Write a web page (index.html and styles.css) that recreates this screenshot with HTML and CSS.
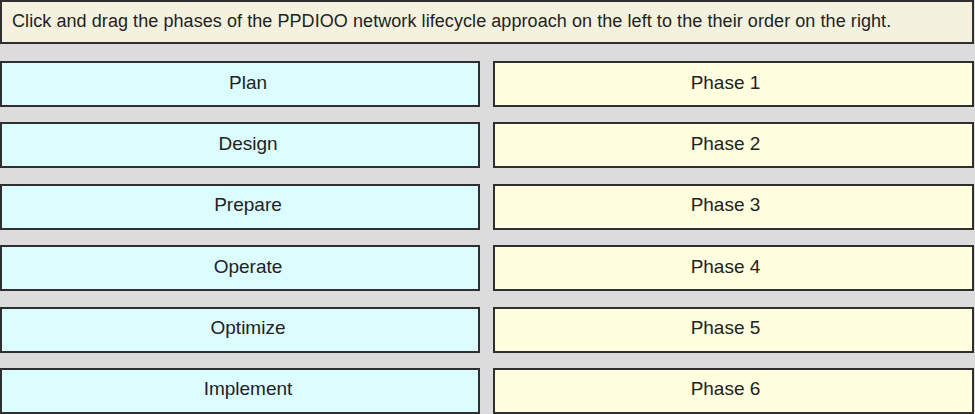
FILE: index.html
```html
<!DOCTYPE html>
<html lang="en">
<head>
    <meta charset="UTF-8">
    <title>PPDIOO Drag and Drop</title>
    <link rel="stylesheet" href="styles.css">
</head>
<body>
    <div class="question">
        Click and drag the phases of the PPDIOO network lifecycle approach on the left to the their order on the right.
    </div>
    <div class="board">
        <div class="item source">Plan</div>
        <div class="item target">Phase 1</div>
        <div class="item source">Design</div>
        <div class="item target">Phase 2</div>
        <div class="item source">Prepare</div>
        <div class="item target">Phase 3</div>
        <div class="item source">Operate</div>
        <div class="item target">Phase 4</div>
        <div class="item source">Optimize</div>
        <div class="item target">Phase 5</div>
        <div class="item source">Implement</div>
        <div class="item target">Phase 6</div>
    </div>
</body>
</html>
```

FILE: styles.css
```css
body {
    margin: 0;
    padding: 0 1px 0 0;
    background-color: #dcdcdc;
    font-family: "Liberation Sans", Arial, sans-serif;
    color: #222;
}
.question {
    box-sizing: border-box;
    height: 44px;
    padding: 0 10px 1px;
    display: flex;
    align-items: center;
    background-color: #f4f2de;
    border: 2px solid #2f2f2f;
    font-size: 18px;
    letter-spacing: 0.07px;
}
.board {
    display: grid;
    grid-template-columns: 480px 481px;
    column-gap: 13px;
    row-gap: 15.4px;
    margin-top: 17px;
}
.item {
    height: 46px;
    box-sizing: border-box;
    border: 2px solid #2f2f2f;
    display: flex;
    align-items: center;
    justify-content: center;
    padding-bottom: 3px;
    font-size: 19px;
}
.source {
    background-color: #dcfdff;
    padding-left: 16px;
}
.target {
    background-color: #ffffe0;
    padding-right: 16px;
}
```
